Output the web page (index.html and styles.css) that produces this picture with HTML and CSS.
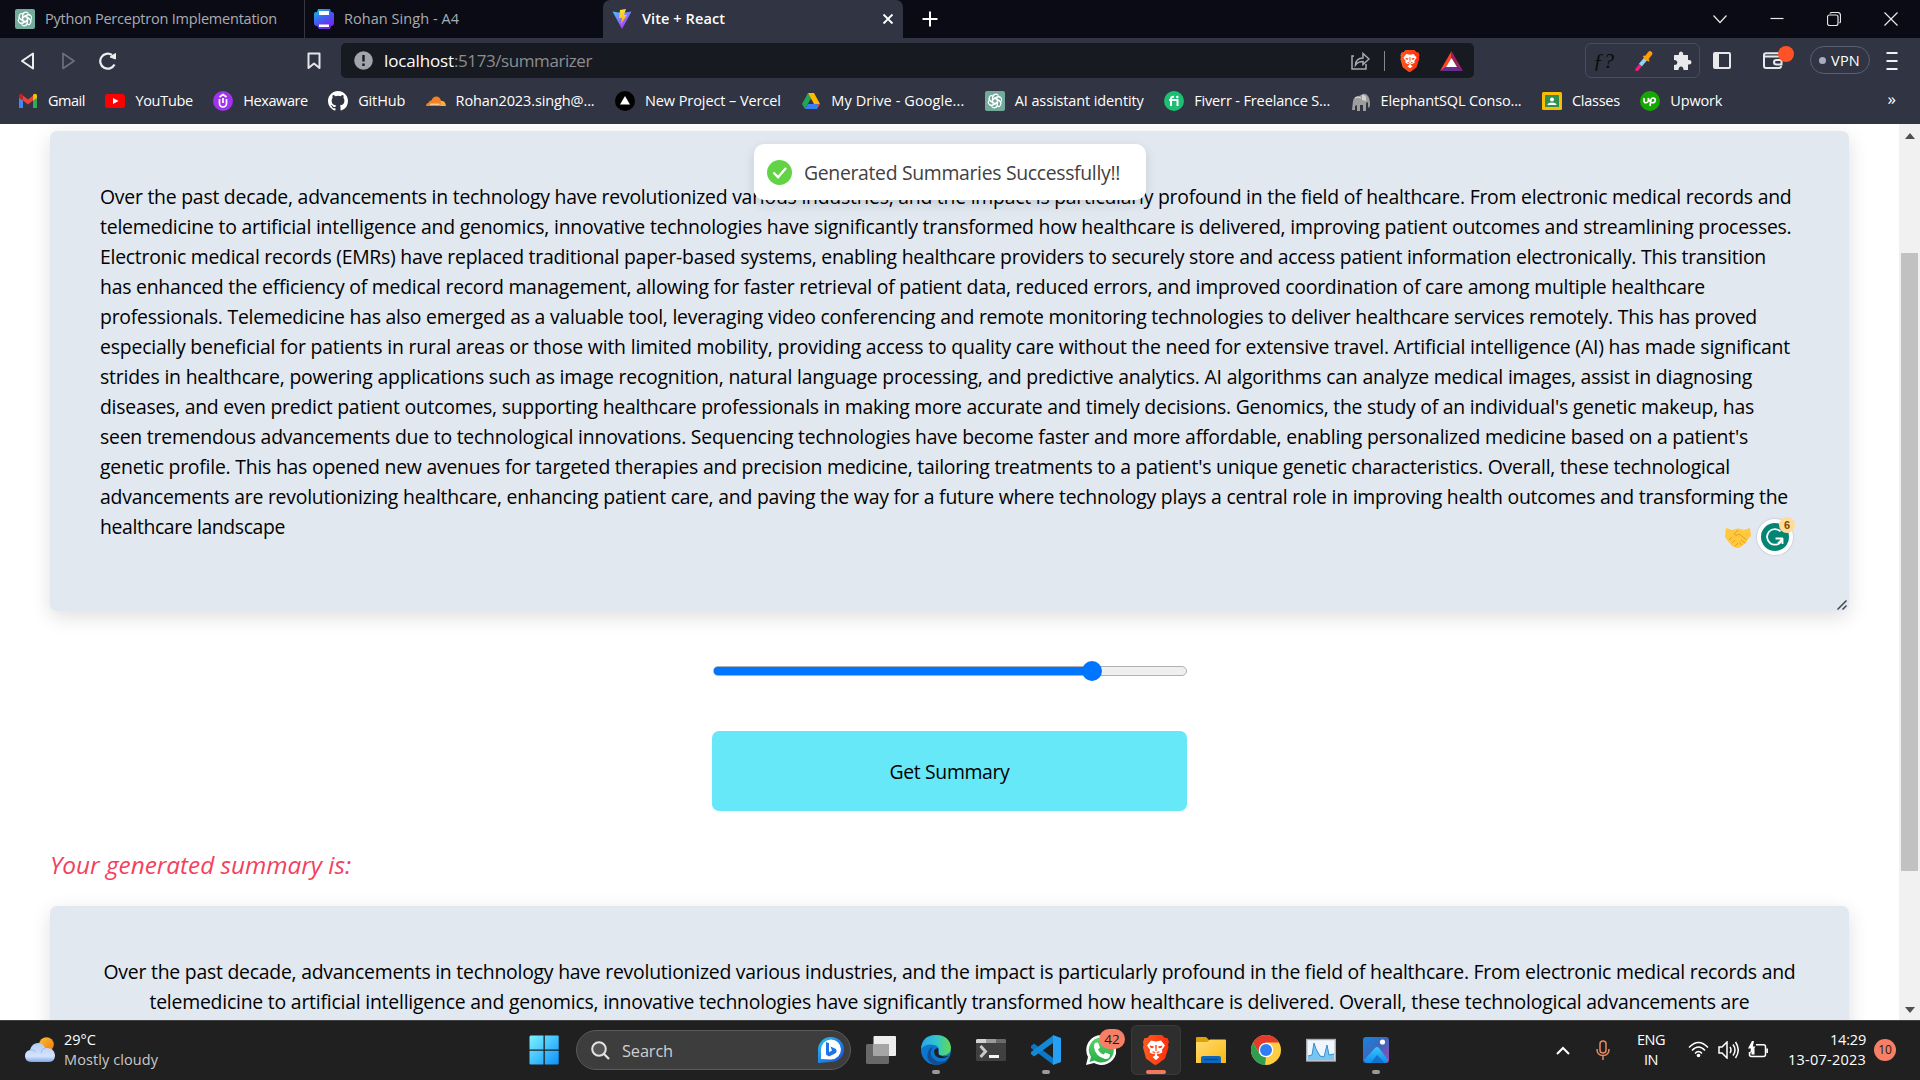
FILE: index.html
```html
<!DOCTYPE html>
<html lang="en">
<head>
<meta charset="utf-8">
<title>Vite + React</title>
<link rel="stylesheet" href="styles.css">
</head>
<body>
<svg class="defs" width="0" height="0" aria-hidden="true">
  <defs>
    <linearGradient id="gBrave" x1="0" x2="1"><stop offset="0" stop-color="#ff5a1f"/><stop offset="1" stop-color="#ff2f0e"/></linearGradient>
    <linearGradient id="gPrint" x1="0" y1="0" x2=".6" y2="1"><stop offset="0" stop-color="#12c6d8"/><stop offset=".5" stop-color="#3f62f2"/><stop offset="1" stop-color="#7a22f0"/></linearGradient>
    <linearGradient id="gVite" x1="0" y1="0" x2=".7" y2="1"><stop offset="0" stop-color="#41c6ff"/><stop offset="1" stop-color="#c02bff"/></linearGradient>
    <linearGradient id="gBolt" x1="0" y1="0" x2="0" y2="1"><stop offset="0" stop-color="#ffe23b"/><stop offset="1" stop-color="#ffa800"/></linearGradient>
    <linearGradient id="gWin" x1="0" y1="0" x2="1" y2="1"><stop offset="0" stop-color="#7df3ff"/><stop offset="1" stop-color="#0a92fb"/></linearGradient>
    <linearGradient id="gCloud" x1="0" y1="0" x2="0" y2="1"><stop offset="0" stop-color="#b3ccf8"/><stop offset=".7" stop-color="#d5e3fb"/><stop offset="1" stop-color="#7fa5ee"/></linearGradient>
    <linearGradient id="gSun" x1="0" y1="0" x2="1" y2="1"><stop offset="0" stop-color="#fcc02e"/><stop offset="1" stop-color="#ee7714"/></linearGradient>
    <linearGradient id="gEdgeT" x1="0" x2="1"><stop offset="0" stop-color="#2aa7ea"/><stop offset=".5" stop-color="#2fc4d2"/><stop offset="1" stop-color="#62dc4c"/></linearGradient>
    <linearGradient id="gFold" x1="0" y1="0" x2="1" y2="1"><stop offset="0" stop-color="#ffdc73"/><stop offset="1" stop-color="#fbb80f"/></linearGradient>
    <linearGradient id="gPhoto" x1="0" y1="0" x2="1" y2="1"><stop offset="0" stop-color="#1485dc"/><stop offset=".5" stop-color="#3f66bf"/><stop offset="1" stop-color="#a34aa8"/></linearGradient>
    <linearGradient id="gHill" x1="0" y1="0" x2="0" y2="1"><stop offset="0" stop-color="#37c7f6"/><stop offset="1" stop-color="#0d8df0"/></linearGradient>
    <linearGradient id="gGreen" x1="0" y1="0" x2="0" y2="1"><stop offset="0" stop-color="#5bd36b"/><stop offset="1" stop-color="#26ad47"/></linearGradient>
    <linearGradient id="gBing" x1="0" y1="0" x2="1" y2="1"><stop offset="0" stop-color="#2ac2f2"/><stop offset="1" stop-color="#1a4bd6"/></linearGradient>
    <symbol id="lion" viewBox="0 0 26 30">
      <path fill="url(#gBrave)" d="M7 0h12l3 3h2.500l1.500 4-1 2.500.500 3-3.500 11-8 6-1.500.500-1.500-.500-8-6-3-11 .500-3L0 7l1.500-4H4z"/>
      <path fill="#fff" d="M8 5.500l5 1 5-1 4 5-3 4.200.300 2.800-3.300 1.500-2-.500v2l2.500 1.500L13 25l-3.500-3 2.500-1.500v-2l-2 .500-3.300-1.500.300-2.800-3-4.200z"/>
      <path fill="#fb4517" d="M6.500 10.500l4.500 1-1 1.800-2.500-.500zM19.500 10.500l-4.500 1 1 1.800 2.500-.500zM12.200 10h1.600l-.3 6h-1zM8.500 17l2.500-.8 1.200 1.600h1.600l1.200-1.600 2.500.8-2.500.7-2 .6-2-.6z"/>
    </symbol>
    <symbol id="gpt" viewBox="0 0 20 20">
      <rect width="20" height="20" rx="2" fill="#74aa9c"/>
      <g fill="none" stroke="#fff" stroke-width="1.150">
        <path id="petal" d="M7.600 12.500V6.300a3.200 3.200 0 0 1 5.900-1.600M7.600 8.700l4.700-2.700a2.700 2.700 0 0 1 2.900.1"/>
        <use href="#petal" transform="rotate(60 10 10)"/><use href="#petal" transform="rotate(120 10 10)"/><use href="#petal" transform="rotate(180 10 10)"/><use href="#petal" transform="rotate(240 10 10)"/><use href="#petal" transform="rotate(300 10 10)"/>
      </g>
    </symbol>
  </defs>
</svg>

<header class="browser">
  <div class="tabs">
    <div class="tab tab-first"><svg width="20" height="20"><use href="#gpt"/></svg><span data-w="232">Python Perceptron Implementation</span></div>
    <div class="tab tab-second">
      <svg width="20" height="20" viewBox="0 0 20 20"><path fill="url(#gPrint)" d="M4 0h12l1 3h1q2 0 2 2v9q0 3-3 3l-1 3H5l-2-3q-3 0-3-3V5q0-2 2-2h1z"/><path fill="#fff" d="M5 2h10v4H5zM5 15.500h10V18H5z"/></svg>
      <span data-w="115">Rohan Singh - A4</span>
    </div>
    <div class="tab tab-active">
      <svg width="20" height="20" viewBox="0 0 20 20"><path fill="url(#gVite)" d="M.5 2.500L10 4l9.500-1.500L10 20z"/><path fill="url(#gBolt)" d="M8 1l6-1-2 6h3L9 15l1-6H7z"/></svg>
      <span data-w="83">Vite + React</span>
      <svg class="tab-close" width="12" height="12" viewBox="0 0 12 12"><path d="M1.500 1.500l9 9m0-9l-9 9" stroke="#fff" stroke-width="1.800"/></svg>
    </div>
    <svg class="new-tab" width="16" height="16" viewBox="0 0 16 16"><path d="M8 .500v15M.500 8h15" stroke="#fff" stroke-width="2"/></svg>
    <div class="window-buttons">
      <svg width="14" height="14" viewBox="0 0 14 14"><path d="M.5 3.500l6.500 7 6.500-7"/></svg>
      <svg width="14" height="14" viewBox="0 0 14 14"><path d="M.5 6.500h13"/></svg>
      <svg width="14" height="14" viewBox="0 0 14 14"><rect x=".5" y="3" width="10.500" height="10.500" rx="2"/><path d="M3 1.500q.5-1 2-1h5.500q3 0 3 3V9q0 1.500-1 2"/></svg>
      <svg width="14" height="14" viewBox="0 0 14 14"><path d="M.5 .5l13 13m0-13l-13 13"/></svg>
    </div>
  </div>

  <div class="toolbar">
    <div class="nav">
      <svg width="16" height="18" viewBox="0 0 16 18"><path d="M13 1.500v15L2 9z" fill="none" stroke="#eee" stroke-width="2" stroke-linejoin="round"/></svg>
      <svg width="16" height="18" viewBox="0 0 16 18"><path d="M3 1.500v15L14 9z" fill="none" stroke="#6e6f7b" stroke-width="1.700" stroke-linejoin="round"/></svg>
      <svg width="18" height="18" viewBox="0 0 18 18"><path d="M15.500 12.500A7.500 7.500 0 1 1 13 3" fill="none" stroke="#eee" stroke-width="2.200"/><path d="M11 5l5.500-3.500V7z" fill="#eee" stroke="#eee" stroke-linejoin="round"/></svg>
    </div>
    <svg class="bookmark" width="14" height="18" viewBox="0 0 14 18"><path d="M1.500 1.500h11v14.500L7 11.500 1.500 16z" fill="none" stroke="#e6e6e9" stroke-width="2" stroke-linejoin="round"/></svg>
    <div class="address">
      <svg width="19" height="19" viewBox="0 0 19 19"><circle cx="9.500" cy="9.500" r="9.300" fill="#a2a4ad"/><path d="M9.500 4v6.500M9.500 12.500V15" stroke="#181a21" stroke-width="2.400"/></svg>
      <div class="url"><span class="host" data-w="70">localhost</span><span data-w="138">:5173/summarizer</span></div>
      <svg width="19" height="18" viewBox="0 0 19 18"><path d="M3 4H1v13h14v-5M4.500 13Q5 6 12 6V1.500L18 7l-6 5.500V9.500Q7 9.500 4.500 13z" fill="none" stroke="#a9abb2" stroke-width="1.500"/></svg>
      <i class="rule"></i>
      <svg class="shield" width="20" height="22"><use href="#lion"/></svg>
      <svg width="23" height="20" viewBox="0 0 23 20"><path fill="#ff4724" d="M11.500 0v7.500L6 16l-6 4z"/><path fill="#9e1f63" d="M11.500 0L23 20l-6-4-5.500-8.500z"/><path fill="#662d91" d="M0 20l5.500-4H17l6 4z"/><path fill="#fff" d="M11.500 7L17 16H6z"/></svg>
    </div>
    <div class="extensions">
      <span class="fq">ƒ?</span>
      <svg width="18" height="20" viewBox="0 0 18 20"><path d="M2 18.500L6 13.500" stroke="#ed1e79" stroke-width="3.500" stroke-linecap="round"/><path d="M5.500 14L11 7.500" stroke="#8fd3f7" stroke-width="4"/><path d="M11.500 7l3.500-4.500" stroke="#ff9d0a" stroke-width="4.600" stroke-linecap="round"/><path d="M8.500 5l5.500 5" stroke="#ff9d0a" stroke-width="2"/></svg>
      <svg width="19" height="20" viewBox="0 0 19 20"><path fill="#e9e9ec" d="M1.500 4h4.300V3q0-2.500 2.200-2.500T10.200 3v1H15v5h1q2.500 0 2.500 2.200T16 13.500h-1V19h-4.500q0-3.500-2.500-3.500T5.500 19H1v-5q3.300 0 3.300-2.500T1 9V4.500z"/></svg>
    </div>
    <svg class="panel" width="18" height="17" viewBox="0 0 18 17"><rect x="1" y="1" width="16" height="15" rx="1" fill="none" stroke="#e9e9ec" stroke-width="2"/><path fill="#e9e9ec" d="M1 1h5v15H1z"/></svg>
    <div class="wallet"><svg width="20" height="17" viewBox="0 0 20 17"><path d="M17 4V1.200H3Q1 1.200 1 3v11q0 2 2 2h13q2 0 2-2M1 4.500h17V8M18.500 8h-5q-2.500 0-2.500 2.200t2.500 2.200h5z" fill="none" stroke="#e9e9ec" stroke-width="2"/></svg><i></i></div>
    <div class="vpn"><i></i><span data-w="29">VPN</span></div>
    <svg class="menu" width="12" height="20" viewBox="0 0 12 20"><path d="M.5 2h11M.5 10h11M.5 18h11" stroke="#f1f1f3" stroke-width="2"/></svg>
  </div>

  <nav class="bookmarks">
    <div class="bm"><svg width="20" height="20" viewBox="0 0 20 20"><path fill="#4285f4" d="M1 4v13h4V8z"/><path fill="#34a853" d="M15 8v9h4V4z"/><path fill="#ea4335" d="M3 3l7 5.500L17 3v5l-7 5.500L3 8z"/><path fill="#c5221f" d="M1 5q0-3 3-2l1 1v5.500L1 7z"/><path fill="#fbbc04" d="M19 5q0-3-3-2l-1 1v5.500L19 7z"/></svg><span data-w="37">Gmail</span></div>
    <div class="bm"><svg width="20" height="20" viewBox="0 0 20 20"><rect y="3" width="20" height="14" rx="3" fill="#f00"/><path fill="#fff" d="M8 7l5.500 3L8 13z"/></svg><span data-w="57.500">YouTube</span></div>
    <div class="bm"><svg width="20" height="20" viewBox="0 0 20 20"><circle cx="10" cy="10" r="10" fill="#9f33ee"/><path d="M6.500 8v4.500a3.500 3.500 0 0 0 7 0V8M6.500 6L10 3.500 13.500 6M10 7v5" fill="none" stroke="#fff" stroke-width="1.700"/></svg><span data-w="64.500">Hexaware</span></div>
    <div class="bm"><svg width="20" height="20" viewBox="0 0 16 16"><path fill="#fff" d="M8 0C3.580 0 0 3.580 0 8c0 3.540 2.290 6.530 5.470 7.590.4.070.550-.170.550-.380 0-.190-.010-.820-.010-1.490-2.010.370-2.530-.490-2.690-.940-.090-.230-.480-.940-.820-1.130-.280-.150-.680-.520-.010-.530.630-.010 1.080.580 1.230.820.720 1.210 1.870.870 2.330.660.070-.520.280-.870.510-1.070-1.780-.200-3.640-.890-3.640-3.950 0-.870.310-1.590.820-2.150-.080-.200-.360-1.020.080-2.120 0 0 .670-.210 2.200.820a7.600 7.600 0 0 1 4 0c1.530-1.040 2.200-.820 2.200-.820.440 1.100.160 1.920.080 2.120.510.560.820 1.270.820 2.150 0 3.070-1.870 3.750-3.650 3.950.290.250.540.730.540 1.480 0 1.070-.010 1.930-.010 2.200 0 .210.150.460.550.380A8 8 0 0 0 16 8c0-4.420-3.580-8-8-8z"/></svg><span data-w="47">GitHub</span></div>
    <div class="bm"><svg width="20" height="20" viewBox="0 0 20 20"><path fill="#f6821f" d="M0 15q0-3 3-3.500Q3 9 5.500 9.500 7 5 11 5.500q3 .500 4 4L14 15z"/><path fill="#fbad41" d="M14.500 9.800q5-.3 5.500 5.200h-6z"/><path d="M4 13.200h9.500" stroke="#fff" stroke-width=".8"/></svg><span data-w="139">Rohan2023.singh@...</span></div>
    <div class="bm"><svg width="20" height="20" viewBox="0 0 20 20"><circle cx="10" cy="10" r="10"/><path fill="#fff" d="M10 5l5 8.500H5z"/></svg><span data-w="136">New Project – Vercel</span></div>
    <div class="bm"><svg width="20" height="20" viewBox="0 0 20 20"><path fill="#23a556" d="M7 2l3 5.500-6 10.500L1 13z"/><path fill="#ffba00" d="M7 2h6l6 11h-6z"/><path fill="#3b7cf0" d="M7 13h12l-3 5H4z"/><path fill="#ea4335" d="M16 13h3l-2 3z"/></svg><span data-w="133">My Drive - Google...</span></div>
    <div class="bm"><svg width="20" height="20"><use href="#gpt"/></svg><span data-w="129">AI assistant identity</span></div>
    <div class="bm"><svg width="20" height="20" viewBox="0 0 20 20"><circle cx="10" cy="10" r="10" fill="#1dbf73"/><path d="M7 15V7.500Q7 5.500 10 5.700M5 9h8.500v6" fill="none" stroke="#fff" stroke-width="2"/><circle cx="13.300" cy="6" r="1.300" fill="#fff"/></svg><span data-w="136">Fiverr - Freelance S...</span></div>
    <div class="bm"><svg width="20" height="20" viewBox="0 0 20 20"><path fill="#9d9d9d" d="M2 10q1-5 6-5l2-1q4-3 7 1 2 3 2 9l-1 3-1-1V11l-2 1v8h-3v-6H9v6H6v-6l-2 1v4H1z"/><path fill="#d2d2d2" d="M11 4q5-1 4 6l-4-1z"/><path d="M4 7q3-2 6 0" stroke="#ddd" fill="none"/></svg><span data-w="141">ElephantSQL Conso...</span></div>
    <div class="bm"><svg width="20" height="20" viewBox="0 0 20 20"><rect y="1" width="20" height="18" rx="1.500" fill="#fbbc04"/><rect x="3" y="4" width="14" height="12" fill="#2f9151"/><circle cx="10" cy="8.500" r="2" fill="#fff"/><path fill="#fff" d="M5.500 14q0-2.500 4.500-2.500t4.500 2.500z"/></svg><span data-w="48">Classes</span></div>
    <div class="bm"><svg width="20" height="20" viewBox="0 0 20 20"><circle cx="10" cy="10" r="10" fill="#14a800"/><path d="M4 7v2.500q0 2.300 2 2.300t2.300-2.300V7q1.500 4.800 4 4.800t3-2.300q0-2.500-2.200-2.500T10.800 10L10 15" fill="none" stroke="#fff" stroke-width="1.600"/></svg><span data-w="52">Upwork</span></div>
    <span class="more">»</span>
  </nav>
</header>

<div class="viewport">
  <main class="page">
    <section class="card source">
      <div class="lines">
        <p><span data-w="1691.500">Over the past decade, advancements in technology have revolutionized various industries, and the impact is particularly profound in the field of healthcare. From electronic medical records and</span></p>
        <p><span data-w="1691.500">telemedicine to artificial intelligence and genomics, innovative technologies have significantly transformed how healthcare is delivered, improving patient outcomes and streamlining processes.</span></p>
        <p><span data-w="1666">Electronic medical records (EMRs) have replaced traditional paper-based systems, enabling healthcare providers to securely store and access patient information electronically. This transition</span></p>
        <p><span data-w="1605">has enhanced the efficiency of medical record management, allowing for faster retrieval of patient data, reduced errors, and improved coordination of care among multiple healthcare</span></p>
        <p><span data-w="1657">professionals. Telemedicine has also emerged as a valuable tool, leveraging video conferencing and remote monitoring technologies to deliver healthcare services remotely. This has proved</span></p>
        <p><span data-w="1690">especially beneficial for patients in rural areas or those with limited mobility, providing access to quality care without the need for extensive travel. Artificial intelligence (AI) has made significant</span></p>
        <p><span data-w="1652">strides in healthcare, powering applications such as image recognition, natural language processing, and predictive analytics. AI algorithms can analyze medical images, assist in diagnosing</span></p>
        <p><span data-w="1654">diseases, and even predict patient outcomes, supporting healthcare professionals in making more accurate and timely decisions. Genomics, the study of an individual's genetic makeup, has</span></p>
        <p><span data-w="1648">seen tremendous advancements due to technological innovations. Sequencing technologies have become faster and more affordable, enabling personalized medicine based on a patient's</span></p>
        <p><span data-w="1630">genetic profile. This has opened new avenues for targeted therapies and precision medicine, tailoring treatments to a patient's unique genetic characteristics. Overall, these technological</span></p>
        <p><span data-w="1688">advancements are revolutionizing healthcare, enhancing patient care, and paving the way for a future where technology plays a central role in improving health outcomes and transforming the</span></p>
        <p><span data-w="185">healthcare landscape</span></p>
      </div>
      <div class="assist">
        <svg width="26" height="21" viewBox="0 0 26 21"><path fill="#ffc83d" d="M1 1l6 2 6-1.500L19 3l6-2 1 8-3 3-2 4-3 2-3 2.500-4 .5-4-2-4-5-3-4z"/><path d="M13 3L9 7q2 3 5 0l8 6M4 13l3-2.500M7 16l3-3M10 19l3-3M16 13l4 3M14 15l3 3" fill="none" stroke="#dd9420" stroke-width=".8"/></svg>
        <div class="grammar"><svg width="28" height="28" viewBox="0 0 28 28"><circle cx="14" cy="14" r="14" fill="#028673"/><path d="M19.500 8.500A7.800 7.800 0 1 0 20.500 18M14.500 15.500h7.300M21.500 15v6M21.500 16L17 20.500" fill="none" stroke="#fff" stroke-width="1.800"/></svg><b>6</b></div>
      </div>
      <svg class="grip" width="10" height="10" viewBox="0 0 10 10"><path d="M.5 9.500l9-9M5.500 9.500l4-4" stroke="#444" stroke-width="1.500"/></svg>
    </section>

    <div class="slider"><div class="track"><div class="fill" style="width:80%"></div></div><i class="thumb" style="left:79.800%"></i></div>
    <button class="submit"><span data-w="120">Get Summary</span></button>
    <h2 class="heading"><span data-w="301">Your generated summary is:</span></h2>

    <section class="card result">
      <p><span data-w="1692">Over the past decade, advancements in technology have revolutionized various industries, and the impact is particularly profound in the field of healthcare. From electronic medical records and</span></p>
      <p><span data-w="1600">telemedicine to artificial intelligence and genomics, innovative technologies have significantly transformed how healthcare is delivered. Overall, these technological advancements are</span></p>
    </section>

    <div class="toast">
      <svg width="25" height="25" viewBox="0 0 25 25"><circle cx="12.500" cy="12.500" r="12.500" fill="#61d345"/><path d="M6.500 12.500l4.500 4.700L19 8" fill="none" stroke="#fff" stroke-width="2.300"/></svg>
      <span data-w="316">Generated Summaries Successfully!!</span>
    </div>
  </main>
  <div class="scrollbar">
    <svg width="10" height="6" viewBox="0 0 10 6"><path d="M5 0l5 6H0z" fill="#505050"/></svg>
    <div class="rail"><div class="handle"></div></div>
    <svg width="10" height="6" viewBox="0 0 10 6"><path d="M0 0h10L5 6z" fill="#505050"/></svg>
  </div>
</div>

<footer class="taskbar">
  <div class="weather">
    <svg width="30" height="26" viewBox="0 0 30 26"><circle cx="21.500" cy="7.500" r="7.300" fill="url(#gSun)"/><path fill="url(#gCloud)" d="M6 25q-6-.5-6-6 0-5 5-6Q7 6 13 6q5 0 7 5 9-1 10 7 0 7-6 7z"/><path d="M5 13q4-1 6 2M20 11q-4 1-4 5" stroke="#8eabeb" fill="none" opacity=".7"/></svg>
    <div class="two"><span data-w="32">29°C</span><span class="dim" data-w="94">Mostly cloudy</span></div>
  </div>
  <div class="center">
    <svg class="start" width="30" height="30" viewBox="0 0 30 30"><path fill="url(#gWin)" d="M1.500.5h13v14h-14v-13zM15.800.5H29q.7 0 .7.800v13.200H15.800zM.5 15.800h14v13.700H1.500q-1 0-1-1zM15.800 15.800h13.900v12.700q0 1-1 1H15.800z"/></svg>
    <div class="search">
      <svg width="19" height="19" viewBox="0 0 19 19"><circle cx="8" cy="8" r="6.800" fill="#555" stroke="#e4e4e4" stroke-width="2"/><path d="M13 13l5 5" stroke="#e4e4e4" stroke-width="2.300"/></svg>
      <span data-w="51">Search</span>
      <svg class="bing" width="26" height="26" viewBox="0 0 26 26"><path fill="url(#gBing)" d="M0 26V13A13 12.500 0 1 1 13 25z"/><path fill="#fff" d="M3 22v-9a10 10 0 1 1 10 9.500z"/><path fill="#1b74e8" d="M8 5l3 1.200v9l3-1.700-1.500-4L18 12q1.500 3-1 4.500l-6 3-3-2z"/></svg>
    </div>
    <div class="apps">
      <div class="app"><svg width="30" height="30" viewBox="0 0 30 30"><rect y="9" width="23" height="20" rx="1.500" fill="#686868"/><rect x="7.500" y="1" width="22.500" height="20" rx="1" fill="#ededed"/><path fill="#a5a5a5" d="M7.500 9H23v12H7.500z"/></svg></div>
      <div class="app run"><svg width="30" height="30" viewBox="0 0 30 30"><circle cx="15" cy="15" r="15" fill="#0d76cf"/><path fill="url(#gEdgeT)" d="M0 14Q1 0 15 0q13 0 15 12 0 8-8 8.500-5 0-4.500-3 2-6-4-7.500Q5 8 0 14z"/><path fill="#104f96" d="M12 12q-6 9 4 14 7 2 12-3-4 7-13 7Q4 27 7 17q1-4 5-5z"/><path fill="#202020" d="M17 13q-6 1-3 7 5 6 14 1-5 1-9-.5-2-1-1.500-3z"/></svg></div>
      <div class="app"><svg width="30" height="30" viewBox="0 0 30 30"><rect y="4" width="30" height="22" rx="1.500" fill="#404040"/><path fill="#d2d2d2" d="M1 4h9v4H0V5z"/><path fill="#9a9a9a" d="M10 4h10v4H10z"/><path fill="#6a6a6a" d="M20 4h9l1 1v3H20z"/><path d="M4.500 11l5 5.500-5 5.500" fill="none" stroke="#c9c9c9" stroke-width="3"/><path fill="#f5f5f5" d="M13 20h10v3H13z"/></svg></div>
      <div class="app run"><svg width="30" height="30" viewBox="0 0 30 30"><path fill="#0a78c8" d="M0 11l3-2.500L22 23v6.500L0 13z"/><path fill="#1588d6" d="M0 19l3 2.500L22 8V.5L0 17z"/><path fill="#26a0f2" d="M22 0l8 3v24l-8 3z"/></svg></div>
      <div class="app"><svg width="30" height="30" viewBox="0 0 30 30"><path fill="#fff" d="M15 0a15 15 0 1 1-7 28L0 30l2-8A15 15 0 0 1 15 0z"/><path fill="url(#gGreen)" d="M15 2.500a12.500 12.500 0 1 1-6.500 23L3.500 27l1.500-5A12.500 12.500 0 0 1 15 2.500z"/><path fill="#fff" d="M9 8l3-.5 2 5-2 2q2 4 5.500 5l2-2 4.500 2q0 5-5 4.500Q9 21 8 12 8 9 9 8z"/></svg><b class="count">42</b></div>
      <div class="app active"><svg width="26" height="30"><use href="#lion"/></svg></div>
      <div class="app"><svg width="30" height="30" viewBox="0 0 30 30"><path fill="#dfa008" d="M0 3q0-1 1-1h9l3 3v4H0z"/><path fill="url(#gFold)" d="M0 7h11l3-2.500h15q1 0 1 1V28H0z"/><path fill="#0e67b8" d="M5 28v-5q0-2 2-2h16q2 0 2 2v5z"/><path d="M8 24.500h14" stroke="#084882" stroke-width="1.200"/></svg></div>
      <div class="app"><svg width="30" height="30" viewBox="0 0 30 30"><circle cx="15" cy="15" r="15" fill="#ffcd40"/><path fill="#e33b2e" d="M2 7.500A15 15 0 0 1 28 7.500H15l-6.500 11z"/><path fill="#2f9e4f" d="M2 7.500l6.500 11.300L15 22.500l-1 7.500A15 15 0 0 1 2 7.500z"/><circle cx="15" cy="15" r="7.300" fill="#fff"/><circle cx="15" cy="15" r="6" fill="#307ef3"/></svg></div>
      <div class="app"><svg width="30" height="30" viewBox="0 0 30 30"><rect x=".7" y="4.500" width="28.600" height="21.500" fill="#f0f6fc" stroke="#a8adb5" stroke-width="1.400"/><path fill="#79c5f2" d="M2 21l4-1 2-12 2 6 4 7 4 1 3-12 2 10 5-1v6H2z"/><path d="M2 21l4-1 2-12 2 6 4 7 4 1 3-12 2 10 5-1" fill="none" stroke="#338fd0"/></svg></div>
      <div class="app run"><svg width="26" height="26" viewBox="0 0 26 26"><rect width="26" height="26" rx="3" fill="url(#gPhoto)"/><path fill="url(#gHill)" d="M1 23L12 11q2-2 4 0l9 12q-1 3-3 3H4q-2 0-3-3z"/><path fill="#1272cc" d="M8 26l6-8 8 8z"/><circle cx="19.500" cy="5" r="2.600" fill="#fff"/></svg></div>
    </div>
  </div>
  <div class="tray">
    <svg class="up" width="14" height="9" viewBox="0 0 14 9"><path d="M1 8l6-6 6 6"/></svg>
    <svg class="mic" width="14" height="20" viewBox="0 0 14 20"><rect x="4" y="1" width="6" height="12" rx="3"/><path d="M1 9q0 6.500 6 6.500T13 9M7 15.500V20"/></svg>
    <div class="two lang"><span data-w="28">ENG</span><span data-w="14">IN</span></div>
    <div class="status">
      <svg width="21" height="17" viewBox="0 0 21 17"><path d="M1 6.500q9.500-10 19 0M4 9.500q6.500-7 13 0M7 12.500q3.500-4 7 0"/><circle cx="10.500" cy="14.500" r="1.800" fill="#fff" stroke="none"/></svg>
      <svg width="21" height="18" viewBox="0 0 21 18"><path d="M1 6h3l5-5v16l-5-5H1zM12 6q2 3 0 6M15 3.500q4 5.500 0 11M17.500 1q5.500 8 0 16"/></svg>
      <svg width="21" height="18" viewBox="0 0 21 18"><path d="M8 3.800h7.500q2 0 2 2v7.700q0 2-2 2H3.500q-2 0-2-2V11M19.200 7.500v4.500"/><path d="M4 0L0 7.500h3L2 13l5.500-7.500H4.800L6 0zM3.500 13.500V11l3-4v6.500z" fill="#fff" stroke="none"/></svg>
    </div>
    <div class="two clock"><span data-w="36">14:29</span><span data-w="78">13-07-2023</span></div>
    <b class="notice">10</b>
  </div>
</footer>
<script src="fit.js"></script>
</body>
</html>
```
FILE: styles.css
```css
* { box-sizing: border-box; }
body {
  margin: 0;
  width: 1920px;
  height: 1080px;
  overflow: hidden;
  display: flex;
  flex-direction: column;
  background: #fff;
  color: #000;
  font-family: "Open Sans", "Noto Sans", sans-serif;
}
p, h2 { margin: 0; font-weight: 400; }
svg { display: block; flex: none; }
.defs { position: absolute; }
[data-w] { white-space: nowrap; }

/* Browser chrome */
.browser { height: 124px; flex: none; background: #313442; color: #fff; font-size: 14.5px; }
.tabs { display: flex; height: 38px; background: #0b0b15; }
.tab { display: flex; align-items: center; gap: 10px; height: 38px; color: #aaabb0; padding-bottom: 1px; }
.tab-first { width: 305px; padding-left: 15px; border-right: 1px solid #37373f; }
.tab-second { width: 298px; padding-left: 9px; }
.tab-active { width: 300px; padding: 0 9px 1px 9px; background: #313442; color: #fff; border-radius: 7px 7px 0 0; font-weight: 600; }
.tab-close { margin-left: auto; }
.new-tab { margin: 11px 0 0 19px; }
.window-buttons { display: flex; align-items: center; gap: 43px; margin-left: auto; padding-right: 22px; height: 37px; }
.window-buttons svg { fill: none; stroke: #e8e8ea; stroke-width: 1.2; }

.toolbar { display: flex; align-items: center; height: 45px; }
.nav { display: flex; gap: 23.5px; width: 307px; padding-left: 20px; }
.address { display: flex; align-items: center; width: 1133px; height: 35px; margin-left: 20px; padding: 0 11px 0 13px; background: #181a21; border-radius: 5px; }
.url { display: flex; flex: 1; padding-left: 11px; font-size: 17px; color: #8c8d91; }
.host { color: #fff; }
.rule { width: 1px; height: 20px; margin: 0 15px 0 14px; background: #85878d; }
.shield { margin-right: 20px; }
.extensions { display: flex; align-items: center; gap: 20px; width: 115px; height: 35px; margin-left: 111px; padding: 0 7px; border: 1px solid #4a4d5b; border-radius: 6px; }
.fq { width: 22px; font: italic 21px/30px "Liberation Serif", serif; color: #0b0b0c; }
.panel { margin-left: 13px; }
.wallet { position: relative; margin-left: 32px; }
.wallet i { position: absolute; left: 15px; top: -6px; width: 16px; height: 16px; border-radius: 50%; background: #ff5226; }
.vpn { display: flex; align-items: center; gap: 5px; width: 60px; height: 28px; margin: 0 0 1px 27px; padding-left: 8px; border: 1px solid #5b5e70; border-radius: 14px; }
.vpn i { width: 7px; height: 7px; border-radius: 50%; background: #a9abc0; }
.menu { margin-left: 16px; }

.bookmarks { display: flex; align-items: center; gap: 20.4px; height: 35px; padding: 0 24px 0 18px; }
.bm { display: flex; align-items: center; gap: 10px; }
.more { margin-left: auto; font-size: 17px; line-height: 20px; padding-bottom: 3px; }

/* Page */
.viewport { display: flex; height: 896px; flex: none; }
.page { position: relative; width: 1899px; height: 896px; padding: 7px 50px 0; overflow: hidden; font-size: 19.4px; line-height: 30px; display: flex; flex-direction: column; align-items: center; }
.card { width: 1799px; flex: none; background: #e1e8f0; border-radius: 7px; box-shadow: 0 6px 20px rgba(0, 0, 0, .13); }
.source { position: relative; height: 480px; padding: 51px 50px 0; }
.lines p { height: 30px; }
.assist { position: absolute; right: 56px; top: 388px; display: flex; align-items: center; gap: 6px; }
.grammar { position: relative; padding: 4px; border-radius: 50%; background: #fff; box-shadow: 0 0 1px 1px #cfd2dd; }
.grammar b { position: absolute; right: -2px; top: -2px; width: 16px; height: 16px; border-radius: 50%; background: #ffdc9a; color: #7a4a00; font: 700 11px/16px "Liberation Sans", sans-serif; text-align: center; }
.grip { position: absolute; right: 2px; bottom: 1px; }

.slider { position: relative; width: 474px; height: 20px; margin-top: 50px; padding-top: 5px; flex: none; }
.track { height: 10px; background: #efefef; border: 1px solid #b2b2b2; border-radius: 5px; overflow: hidden; }
.fill { height: 8px; background: #0075ff; box-shadow: 0 0 0 1px #0075ff; }
.thumb { position: absolute; top: 0; width: 20px; height: 20px; margin-left: -9px; border-radius: 50%; background: #0075ff; }
.submit { flex: none; width: 475px; height: 80px; margin-top: 50px; padding: 1px 0 0; border: 0; border-radius: 7px; background: #67e8f9; color: #000; font: inherit; }
.heading { align-self: flex-start; flex: none; height: 36px; margin: 36px 0 23px; font-size: 24.4px; line-height: 36px; font-style: italic; color: #f43f5e; }
.result { height: 300px; padding-top: 51px; text-align: center; }
.toast { position: absolute; left: 754px; top: 20px; display: flex; align-items: center; gap: 12px; width: 392px; height: 56px; padding: 0 13px; background: #fff; border-radius: 10px; color: #414141; box-shadow: 0 4px 12px rgba(0, 0, 0, .12); }
.toast span { padding-top: 2px; }

.scrollbar { width: 21px; display: flex; flex-direction: column; align-items: center; justify-content: space-between; padding: 9px 0 7px; background: #f1f1f1; }
.rail { flex: 1; padding-top: 114px; }
.handle { width: 17px; height: 618px; background: #c1c1c1; }

/* Taskbar */
.taskbar { display: flex; justify-content: space-between; height: 60px; flex: none; padding-bottom: 1px; background: #202020; border-top: 1px solid #404040; color: #fff; font-size: 14.5px; }
.weather { display: flex; align-items: center; gap: 9px; width: 529px; padding-left: 25px; }
.two { display: flex; flex-direction: column; line-height: 20px; align-items: flex-start; padding-bottom: 1px; }
.dim { color: #c9c9c9; }
.center { display: flex; align-items: center; flex: 1; }
.search { display: flex; align-items: center; gap: 12px; width: 275px; height: 40px; margin-left: 17px; padding: 0 6px 0 14px; border: 1px solid #5a5a5a; border-radius: 20px; background: #3d3d3d; color: #cfcfcf; font-size: 16.4px; }
.bing { margin-left: auto; }
.apps { display: flex; gap: 5px; margin-left: 5px; }
.app { position: relative; display: flex; align-items: center; justify-content: center; width: 50px; height: 50px; border-radius: 6px; }
.app.run::after, .app.active::after { content: ""; position: absolute; bottom: 1px; width: 8px; height: 4px; border-radius: 2px; background: #9a9a9a; }
.app.active { background: #2e2e2e; box-shadow: inset 0 0 0 1px #393939; }
.app.active::after { width: 20px; background: #f4785c; }
.count { position: absolute; left: 23px; top: 4px; width: 26px; height: 20px; border-radius: 10px; background: #f77f66; color: #1a1a1a; font-weight: 400; font-size: 13.5px; line-height: 20px; text-align: center; }
.tray { display: flex; align-items: center; padding-right: 24px; }
.tray svg { fill: none; stroke: #fff; stroke-width: 1.5; }
.tray .up { stroke-width: 2; }
.tray .mic { margin-left: 26px; stroke: #e8895f; }
.lang { width: 28px; margin-left: 27px; align-items: center; }
.status { display: flex; gap: 9px; margin-left: 23px; }
.clock { width: 78px; margin-left: 19px; align-items: flex-end; }
.notice { width: 22px; height: 22px; margin-left: 8px; border-radius: 50%; background: #f77f66; color: #1a1a1a; font-weight: 400; font-size: 12px; line-height: 22px; text-align: center; }
```
FILE: fit.js
```js
// Track each label so that it fills its nominal width.
document.querySelectorAll('[data-w]').forEach(function (el) {
  var range = document.createRange();
  range.selectNodeContents(el);
  var natural = range.getBoundingClientRect().width;
  var target = parseFloat(el.dataset.w);
  el.style.letterSpacing = ((target - natural) / el.textContent.length).toFixed(4) + 'px';
});
```
